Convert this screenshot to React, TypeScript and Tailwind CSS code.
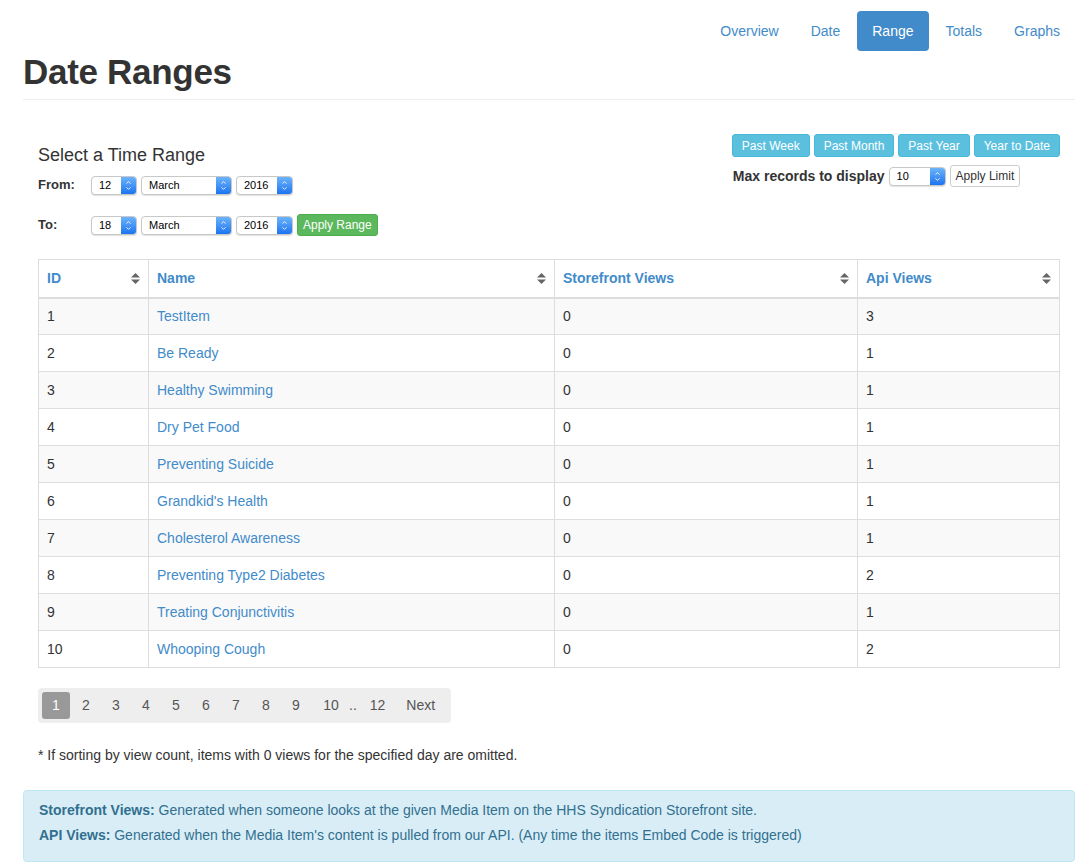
import { ChevronDown, ChevronUp } from 'lucide-react';

const rows = [
  { id: 1, name: 'TestItem', store: 0, api: 3 },
  { id: 2, name: 'Be Ready', store: 0, api: 1 },
  { id: 3, name: 'Healthy Swimming', store: 0, api: 1 },
  { id: 4, name: 'Dry Pet Food', store: 0, api: 1 },
  { id: 5, name: 'Preventing Suicide', store: 0, api: 1 },
  { id: 6, name: "Grandkid's Health", store: 0, api: 1 },
  { id: 7, name: 'Cholesterol Awareness', store: 0, api: 1 },
  { id: 8, name: 'Preventing Type2 Diabetes', store: 0, api: 2 },
  { id: 9, name: 'Treating Conjunctivitis', store: 0, api: 1 },
  { id: 10, name: 'Whooping Cough', store: 0, api: 2 },
];

function MacSelect({ value, width }: { value: string; width: string }) {
  return (
    <div className={`${width} h-[19px] flex items-stretch bg-white border border-[#c8c8c8] rounded-[4px] shadow-[0_1px_1px_rgba(0,0,0,0.12)] overflow-hidden`}>
      <span className="flex-1 pl-[7px] text-[11px] leading-[17px] text-black">{value}</span>
      <span className="w-[15px] flex flex-col items-center justify-center bg-gradient-to-b from-[#6cb3fa] to-[#1a73f0]">
        <ChevronUp className="w-[9px] h-[7px] -mb-[1px] text-white" strokeWidth={3} />
        <ChevronDown className="w-[9px] h-[7px] text-white" strokeWidth={3} />
      </span>
    </div>
  );
}

function SortIcon() {
  return (
    <svg width="9" height="11" viewBox="0 0 9 11" className="shrink-0">
      <path d="M4.5 0 L9 4.5 H0 Z" fill="#666" />
      <path d="M0 6.5 H9 L4.5 11 Z" fill="#666" />
    </svg>
  );
}

export default function App() {
  const tabs = ['Overview', 'Date', 'Range', 'Totals', 'Graphs'];
  const pages = ['1', '2', '3', '4', '5', '6', '7', '8', '9', '10'];

  return (
    <div className="min-h-[868px] bg-white text-[#333] text-[14px] pl-[23px] pr-[16px]" style={{ fontFamily: '"Liberation Sans", Arial, sans-serif' }}>
      {/* Header */}
      <div className="border-b border-[#eee] pb-[7px]">
        <div className="flex justify-end pt-[11px]">
          {tabs.map((tab) => (
            <span
              key={tab}
              className={`h-[40px] px-[15px] ml-[2px] flex items-center rounded-[4px] ${
                tab === 'Range' ? 'bg-[#428bca] text-white' : 'text-[#428bca]'
              }`}
            >
              {tab}
            </span>
          ))}
        </div>
        <h1 className="text-[35px] leading-[40px] font-bold tracking-[-0.3px] text-[#333] mt-[1px]">Date Ranges</h1>
      </div>

      <div className="px-[15px]">
        {/* Range controls */}
        <div className="flex justify-between mt-[34px]">
          <div>
            <h3 className="text-[18px] leading-[20px] mt-[11px] font-medium">Select a Time Range</h3>
            <div className="flex items-center mt-[10px] h-[20px]">
              <span className="w-[53px] font-bold text-[13px]">From:</span>
              <div className="flex gap-[4px]">
                <MacSelect value="12" width="w-[46px]" />
                <MacSelect value="March" width="w-[91px]" />
                <MacSelect value="2016" width="w-[57px]" />
              </div>
            </div>
            <div className="flex items-center mt-[19px] h-[22px]">
              <span className="w-[53px] font-bold text-[13px]">To:</span>
              <div className="flex items-center gap-[4px]">
                <MacSelect value="18" width="w-[46px]" />
                <MacSelect value="March" width="w-[91px]" />
                <MacSelect value="2016" width="w-[57px]" />
                <span className="h-[22px] px-[5px] flex items-center bg-[#5cb85c] border border-[#4cae4c] rounded-[3px] text-white text-[12px]">
                  Apply Range
                </span>
              </div>
            </div>
          </div>
          <div className="flex flex-col items-start">
            <div className="flex gap-[4px]">
              {['Past Week', 'Past Month', 'Past Year', 'Year to Date'].map((b) => (
                <span key={b} className="h-[23px] px-[9px] flex items-center bg-[#5bc0de] border border-[#46b8da] rounded-[3px] text-white text-[12px]">
                  {b}
                </span>
              ))}
            </div>
            <div className="flex items-center mt-[8px] ml-[1px]">
              <span className="font-bold text-[14px] mr-[4px]">Max records to display</span>
              <MacSelect value="10" width="w-[57px]" />
              <span className="ml-[4px] h-[22px] px-[5px] flex items-center bg-white border border-[#ccc] rounded-[3px] text-[12px] text-[#333]">
                Apply Limit
              </span>
            </div>
          </div>
        </div>

        {/* Table */}
        <table className="w-full mt-[23px] border-collapse border border-[#ddd]">
          <thead>
            <tr className="h-[38px] text-left">
              {[
                ['ID', 'w-[110px]'],
                ['Name', 'w-[406px]'],
                ['Storefront Views', 'w-[303px]'],
                ['Api Views', ''],
              ].map(([h, w]) => (
                <th key={h} className={`${w} border border-[#ddd] border-b-2 px-[8px] font-bold text-[#428bca]`}>
                  <div className="flex items-center justify-between">
                    <span>{h}</span>
                    <SortIcon />
                  </div>
                </th>
              ))}
            </tr>
          </thead>
          <tbody>
            {rows.map((r, i) => (
              <tr key={r.id} className={`h-[37px] ${i % 2 === 0 ? 'bg-[#f9f9f9]' : 'bg-white'}`}>
                <td className="border border-[#ddd] px-[8px]">{r.id}</td>
                <td className="border border-[#ddd] px-[8px] text-[#428bca]">{r.name}</td>
                <td className="border border-[#ddd] px-[8px]">{r.store}</td>
                <td className="border border-[#ddd] px-[8px]">{r.api}</td>
              </tr>
            ))}
          </tbody>
        </table>

        {/* Pagination */}
        <div className="inline-flex items-center mt-[20px] h-[35px] px-[4px] bg-[#eee] rounded-[4px]">
          {pages.map((p) => (
            <span
              key={p}
              className={`h-[27px] flex items-center justify-center rounded-[3px] ${
                p === '1' ? 'w-[28px] bg-[#999] text-white' : 'w-[30px] text-[#555]'
              } ${p === '2' ? 'ml-[1px]' : ''} ${p === '10' ? 'ml-[5px] w-[26px]' : ''}`}
            >
              {p}
            </span>
          ))}
          <span className="text-[#555] pl-[3px] pr-[13px]">..</span>
          <span className="text-[#555]">12</span>
          <span className="text-[#555] pl-[21px] pr-[12px]">Next</span>
        </div>

        <p className="mt-[22px] text-[14px]">* If sorting by view count, items with 0 views for the specified day are omitted.</p>
      </div>

      {/* Info */}
      <div className="mt-[24px] bg-[#d9edf7] border border-[#bce8f1] rounded-[4px] px-[15px] pt-[7px] pb-[13px] text-[#31708f] text-[14px] leading-[25px]">
        <div>
          <b>Storefront Views:</b> Generated when someone looks at the given Media Item on the HHS Syndication Storefront site.
        </div>
        <div>
          <b>API Views:</b> Generated when the Media Item's content is pulled from our API. (Any time the items Embed Code is triggered)
        </div>
      </div>
    </div>
  );
}
